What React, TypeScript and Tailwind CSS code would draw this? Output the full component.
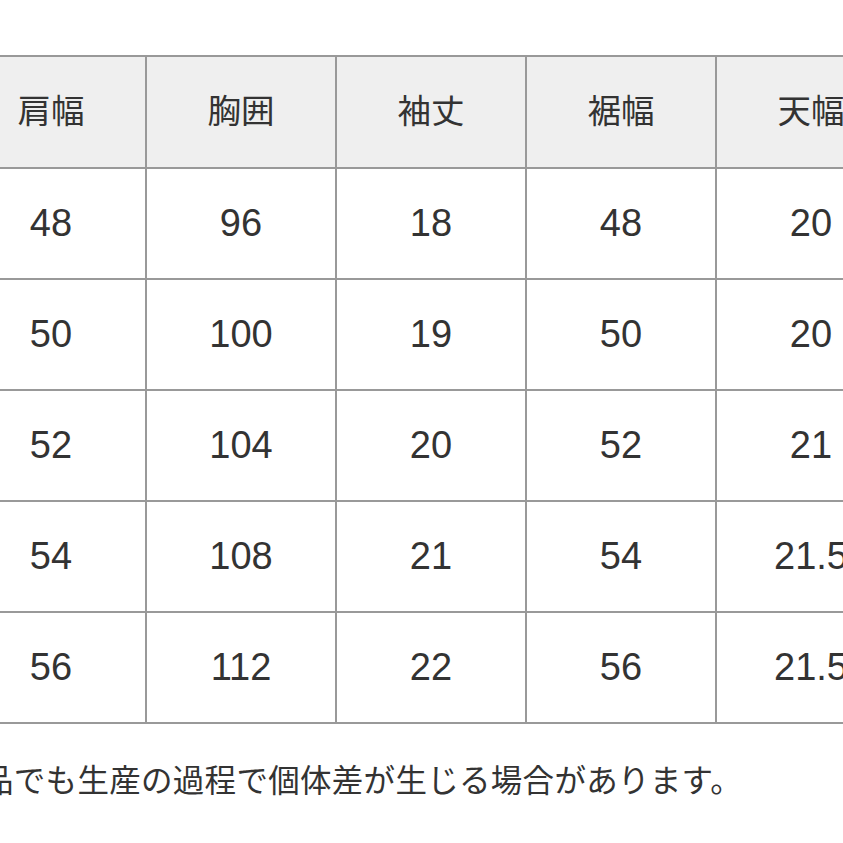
import React from 'react';

const headers = ['肩幅', '胸囲', '袖丈', '裾幅', '天幅'];

const rows: string[][] = [
  ['48', '96', '18', '48', '20'],
  ['50', '100', '19', '50', '20'],
  ['52', '104', '20', '52', '21'],
  ['54', '108', '21', '54', '21.5'],
  ['56', '112', '22', '56', '21.5'],
];

const font = { fontFamily: '"Liberation Sans", "Noto Sans CJK JP", sans-serif' };

const App: React.FC = () => {
  return (
    <div className="w-[843px] h-[843px] overflow-hidden bg-white text-[#333]" style={font}>
      <div className="pt-[55px] -ml-[45px]">
        <table className="border-collapse table-fixed w-[1140px]">
          <thead>
            <tr>
              {headers.map((h) => (
                <th
                  key={h}
                  className="w-[190px] h-[112px] border-2 border-[#999] bg-[#efefef] text-[33.5px] font-normal text-center"
                >
                  {h}
                </th>
              ))}
              <th className="w-[190px] border-2 border-[#999] bg-[#efefef]" />
            </tr>
          </thead>
          <tbody>
            {rows.map((r, i) => (
              <tr key={i}>
                {r.map((v, j) => (
                  <td
                    key={j}
                    className="h-[111px] border-2 border-[#999] text-[38px] text-center"
                  >
                    {v}
                  </td>
                ))}
                <td className="border-2 border-[#999]" />
              </tr>
            ))}
          </tbody>
        </table>
      </div>
      <p className="mt-[36px] -ml-[18px] whitespace-nowrap text-[31.5px] tracking-[0.3px] leading-[42px]">
        品でも生産の過程で個体差が生じる場合があります。
      </p>
    </div>
  );
};

export default App;
